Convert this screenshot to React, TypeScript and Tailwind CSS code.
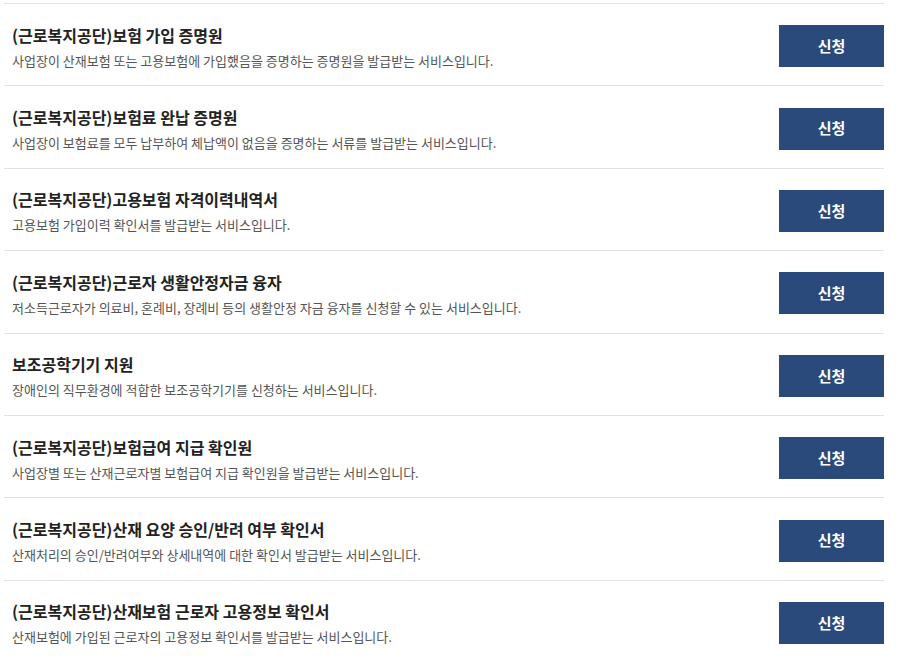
const services = [
  {
    title: "(근로복지공단)보험 가입 증명원",
    desc: "사업장이 산재보험 또는 고용보험에 가입했음을 증명하는 증명원을 발급받는 서비스입니다.",
  },
  {
    title: "(근로복지공단)보험료 완납 증명원",
    desc: "사업장이 보험료를 모두 납부하여 체납액이 없음을 증명하는 서류를 발급받는 서비스입니다.",
  },
  {
    title: "(근로복지공단)고용보험 자격이력내역서",
    desc: "고용보험 가입이력 확인서를 발급받는 서비스입니다.",
  },
  {
    title: "(근로복지공단)근로자 생활안정자금 융자",
    desc: "저소득근로자가 의료비, 혼례비, 장례비 등의 생활안정 자금 융자를 신청할 수 있는 서비스입니다.",
  },
  {
    title: "보조공학기기 지원",
    desc: "장애인의 직무환경에 적합한 보조공학기기를 신청하는 서비스입니다.",
  },
  {
    title: "(근로복지공단)보험급여 지급 확인원",
    desc: "사업장별 또는 산재근로자별 보험급여 지급 확인원을 발급받는 서비스입니다.",
  },
  {
    title: "(근로복지공단)산재 요양 승인/반려 여부 확인서",
    desc: "산재처리의 승인/반려여부와 상세내역에 대한 확인서 발급받는 서비스입니다.",
  },
  {
    title: "(근로복지공단)산재보험 근로자 고용정보 확인서",
    desc: "산재보험에 가입된 근로자의 고용정보 확인서를 발급받는 서비스입니다.",
  },
];

function ServiceRow({ title, desc }: { title: string; desc: string }) {
  return (
    <li className="flex h-[82.4px] items-center justify-between border-b border-[#e2e2e2] pl-2">
      <div className="min-w-0 pt-[4px]">
        <p className="text-[16px] leading-[20px] font-semibold text-[#222]">{title}</p>
        <p className="mt-[7px] text-[13px] leading-[17px] text-[#555]">{desc}</p>
      </div>
      <button className="mt-[3px] flex h-[42px] w-[105px] shrink-0 items-center justify-center bg-[#2a4a7c] text-[15px] font-bold text-white">
        신청
      </button>
    </li>
  );
}

export default function App() {
  return (
    <div
      className="h-[660px] w-[897px] overflow-hidden bg-white pl-1 pt-[3px]"
      style={{ fontFamily: '"Noto Sans CJK KR", "Noto Sans", sans-serif' }}
    >
      <ul className="w-[880px] border-t border-[#e2e2e2]">
        {services.map((s) => (
          <ServiceRow key={s.title} title={s.title} desc={s.desc} />
        ))}
      </ul>
    </div>
  );
}
